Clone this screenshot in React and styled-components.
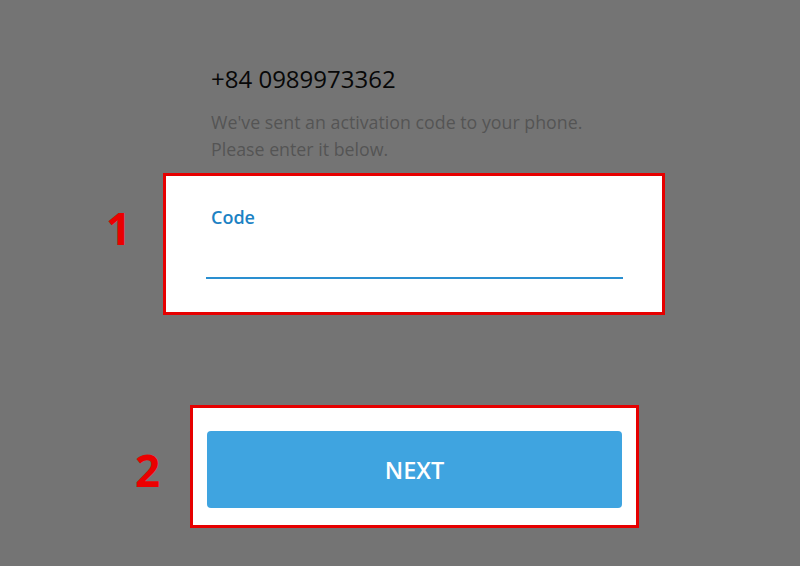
import React from 'react';
import styled, { createGlobalStyle } from 'styled-components';

const GlobalStyle = createGlobalStyle`
	html, body {
		margin: 0;
		padding: 0;
		background: rgb(116, 116, 116);
	}
	body {
		font-family: "Open Sans", "Liberation Sans", sans-serif;
	}
`;

const Page = styled.div`
	width: 800px;
	height: 566px;
	overflow: hidden;
	background: rgb(116, 116, 116);
	display: flex;
	justify-content: center;
	padding-left: 28px;
	box-sizing: border-box;
`;

const Column = styled.div`
	width: 502px;
	display: flex;
	flex-direction: column;
	padding-top: 62px;
`;

const Intro = styled.div`
	padding-left: 48px;
	display: flex;
	flex-direction: column;
`;

const Phone = styled.div`
	font-size: 24px;
	line-height: 34px;
	color: rgb(8, 8, 8);
	font-weight: 500;
`;

const Hint = styled.p`
	margin: 13px 0 0;
	font-size: 17.8px;
	line-height: 27px;
	color: rgb(84, 84, 84);
`;

const Marked = styled.div`
	position: relative;
	background: #fff;
	border: 3px solid rgb(230, 0, 0);
	box-sizing: border-box;
	margin: ${p => p.$margin || '0'};
	height: ${p => p.$height}px;
	padding: ${p => p.$padding};
	display: flex;
	flex-direction: column;
`;

const Step = styled.span`
	position: absolute;
	top: ${p => p.$top}px;
	left: ${p => p.$left}px;
	font-family: "Open Sans", "Liberation Sans", sans-serif;
	font-weight: 700;
	font-size: 44px;
	line-height: 1;
	color: rgb(235, 0, 0);
`;

const Label = styled.label`
	margin-left: 5px;
	font-size: 18px;
	font-weight: 600;
	color: rgb(28, 130, 196);
	line-height: 22px;
`;

const CodeInput = styled.input`
	margin-top: 21px;
	border: none;
	border-bottom: 2px solid rgb(42, 143, 208);
	outline: none;
	height: 28px;
	font-family: inherit;
	font-size: 16px;
	padding: 0;
	background: transparent;
`;

const NextButton = styled.button`
	flex: 1;
	border: none;
	border-radius: 4px;
	background: rgb(63, 164, 224);
	color: #fff;
	font-family: "Open Sans", "Liberation Sans", sans-serif;
	font-size: 23.5px;
	font-weight: 600;
	cursor: pointer;
`;

export default function App() {
	return (
		<Page>
			<GlobalStyle />
			<Column>
				<Intro>
					<Phone>+84 0989973362</Phone>
					<Hint>
						We've sent an activation code to your phone.<br />
						Please enter it below.
					</Hint>
				</Intro>
				<Marked $height={142} $padding="30px 39px 0 40px" style={{ marginTop: 10 }}>
					<Step $left={-60} $top={30}>1</Step>
					<Label htmlFor="code">Code</Label>
					<CodeInput id="code" />
				</Marked>
				<Marked $height={123} $margin="90px 26px 0 27px" $padding="23px 14px 17px 14px">
					<Step $left={-58} $top={40}>2</Step>
					<NextButton>NEXT</NextButton>
				</Marked>
			</Column>
		</Page>
	);
}
